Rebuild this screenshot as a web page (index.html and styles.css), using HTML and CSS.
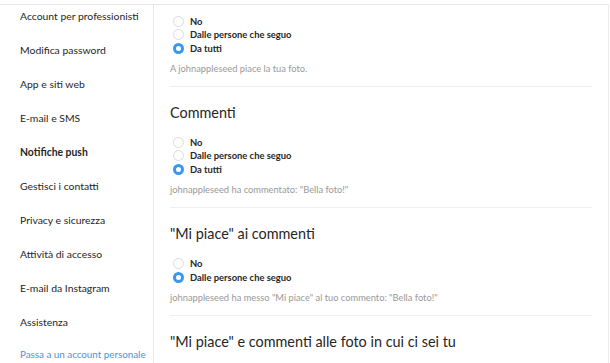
FILE: index.html
```html
<!DOCTYPE html>
<html lang="it">
<head>
<meta charset="utf-8">
<link rel="stylesheet" href="styles.css">
</head>
<body>
<div class="page">
  <nav class="side">
    <ul class="menu">
      <li class="item">Account per professionisti</li>
      <li class="item">Modifica password</li>
      <li class="item">App e siti web</li>
      <li class="item">E-mail e SMS</li>
      <li class="item active">Notifiche push</li>
      <li class="item">Gestisci i contatti</li>
      <li class="item">Privacy e sicurezza</li>
      <li class="item">Attività di accesso</li>
      <li class="item">E-mail da Instagram</li>
      <li class="item">Assistenza</li>
      <li class="item link">Passa a un account personale</li>
    </ul>
  </nav>
  <main class="content">
    <section class="sec first">
      <div class="opts">
        <div class="opt"><span class="radio"></span>No</div>
        <div class="opt"><span class="radio"></span>Dalle persone che seguo</div>
        <div class="opt"><span class="radio on"></span>Da tutti</div>
      </div>
      <p class="hint">A johnappleseed piace la tua foto.</p>
    </section>
    <section class="sec">
      <h2 class="title">Commenti</h2>
      <div class="opts">
        <div class="opt"><span class="radio"></span>No</div>
        <div class="opt"><span class="radio"></span>Dalle persone che seguo</div>
        <div class="opt"><span class="radio on"></span>Da tutti</div>
      </div>
      <p class="hint">johnappleseed ha commentato: "Bella foto!"</p>
    </section>
    <section class="sec">
      <h2 class="title">"Mi piace" ai commenti</h2>
      <div class="opts">
        <div class="opt"><span class="radio"></span>No</div>
        <div class="opt"><span class="radio on"></span>Dalle persone che seguo</div>
      </div>
      <p class="hint">johnappleseed ha messo "Mi piace" al tuo commento: "Bella foto!"</p>
    </section>
    <section class="sec last">
      <h2 class="title">"Mi piace" e commenti alle foto in cui ci sei tu</h2>
    </section>
  </main>
</div>
</body>
</html>
```
FILE: styles.css
```css
* { box-sizing: border-box; }
html, body { margin: 0; padding: 0; background: #fff; }
body {
  font-family: "Lato", "Open Sans", sans-serif;
  color: #262626;
}
.page {
  margin-top: 4px;
  width: 609px;
  height: 359px;
  overflow: hidden;
  border-top: 1px solid #e6e6e6;
  border-right: 1px solid #ececec;
  display: flex;
}
.side {
  width: 154px;
  flex: none;
  border-right: 1px solid #e6e6e6;
}
.menu {
  list-style: none;
  margin: -6px 0 0 0;
  padding: 0;
}
.item {
  height: 34px;
  display: flex;
  align-items: center;
  padding-left: 20px;
  font-size: 10.4px;
  color: #262626;
  white-space: nowrap;
}
.item.active { font-weight: 700; }
.item.link { color: #3897f0; height: 30px; font-size: 9.8px; }
.content {
  flex: 1;
  padding: 0 16px 0 16px;
}
.sec {
  border-bottom: 1px solid #efefef;
  padding: 15px 0 11px;
}
.sec.first { padding-top: 9.5px; padding-bottom: 10.5px; }
.sec.last { border-bottom: none; }
.title {
  margin: 0;
  font-size: 14.4px;
  line-height: 22px;
  font-weight: 400;
  color: #262626;
  white-space: nowrap;
}
.title + .opts { margin-top: 12px; }
.opt {
  height: 13.5px;
  display: flex;
  align-items: center;
  font-size: 9.4px;
  font-weight: 700;
  color: #262626;
}
.radio {
  width: 11px;
  height: 11px;
  border-radius: 50%;
  border: 1px solid #dbdbdb;
  background: #fff;
  margin: 0 6px 0 3px;
  flex: none;
}
.radio.on {
  border: 3.5px solid #3897f0;
}
.hint {
  margin: 7px 0 0 0;
  font-size: 9.3px;
  line-height: 13px;
  color: #999;
  white-space: nowrap;
}
```
